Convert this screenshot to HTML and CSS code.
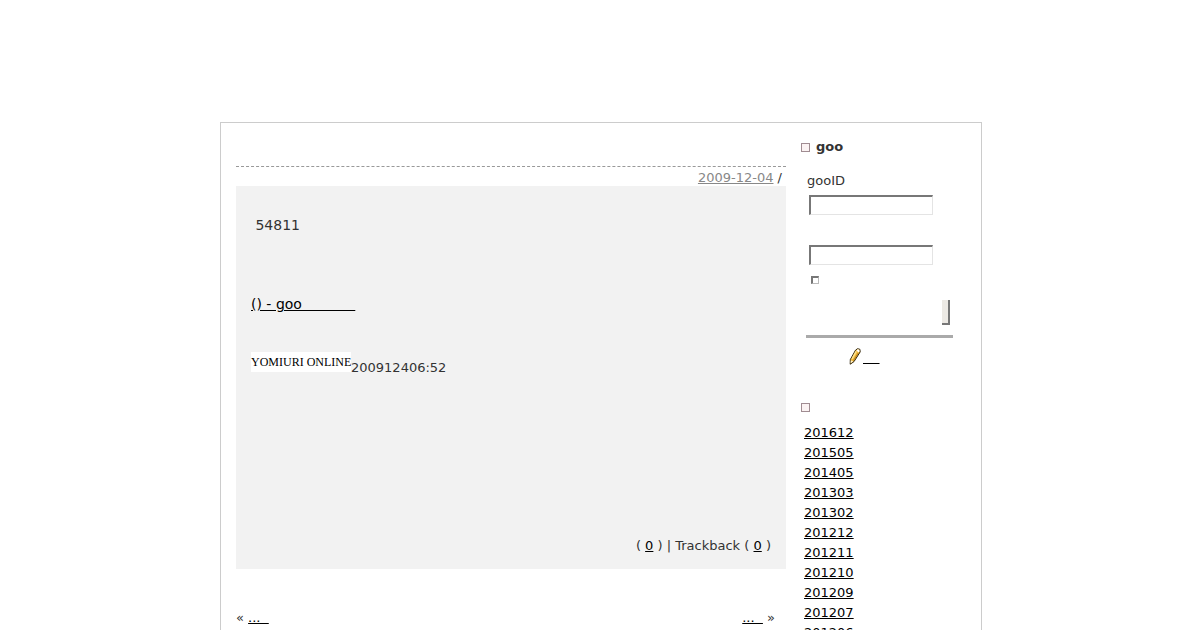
FILE: index.html
```html
<!DOCTYPE html>
<html lang="ja">

<head>
    <meta charset="UTF-8">
    <meta name="viewport" content="width=device-width, initial-scale=1.0">
    <title>goo</title>
    <link rel="stylesheet" href="styles.css">
</head>

<body>

    <div class="container">
        <!-- Entry -->
        <main class="main">
            <div class="entry-title"></div>
            <p class="entry-date"><a href="#">2009-12-04</a> /</p>
            <div class="entry-body">
                <p class="entry-text">&nbsp;54811</p>
                <p class="entry-link"><a href="#">() - goo&nbsp;&nbsp;&nbsp;&nbsp;&nbsp;&nbsp;&nbsp;&nbsp;&nbsp;&nbsp;&nbsp;&nbsp;</a></p>
                <p class="entry-source"><span class="source-logo">YOMIURI ONLINE</span>200912406:52</p>
                <p class="entry-footer">( <a href="#">0</a> ) | Trackback ( <a href="#">0</a> )</p>
            </div>
            <nav class="pager">
                <span>« <a href="#">...&nbsp;&nbsp;</a></span>
                <span><a href="#">...&nbsp;&nbsp;</a> »</span>
            </nav>
        </main>

        <!-- Sidebar -->
        <aside class="sidebar">
            <h2 class="module-title">goo</h2>
            <form class="login">
                <label for="gooid">gooID</label>
                <input type="text" id="gooid" name="gooid">
                <input type="password" id="password" name="password" aria-label="Password">
                <input type="checkbox" id="keep" name="keep" aria-label="Keep">
                <button type="submit" aria-label="Login"></button>
            </form>
            <p class="signup">
                <svg width="12" height="17" viewBox="0 0 12 17" aria-hidden="true">
                    <path d="M6.5 2.2 8.5.7l2.4.6.3 2.6L5 13.6 1.2 16.2l.1-4.6z" fill="#f0b93c" stroke="#30260f" />
                    <path d="M7.2 3.4 3 10.8" stroke="#ffe48f" stroke-width="1.4" />
                    <path d="M9.4 4.8 4.4 12.6" stroke="#bb7d18" />
                    <path d="M7.4 2.3 8.8 1.3l1.6.5.1 1.8-1 .8z" fill="#fff" />
                    <path d="m1.8 12.2 2.4 1.2-2.6 1.9z" fill="#fff5d5" />
                </svg>
                <a href="#">&nbsp;&nbsp;&nbsp;&nbsp;</a>
            </p>
            <h2 class="module-title"></h2>
            <ul class="archive">
                <li><a href="#">201612</a></li>
                <li><a href="#">201505</a></li>
                <li><a href="#">201405</a></li>
                <li><a href="#">201303</a></li>
                <li><a href="#">201302</a></li>
                <li><a href="#">201212</a></li>
                <li><a href="#">201211</a></li>
                <li><a href="#">201210</a></li>
                <li><a href="#">201209</a></li>
                <li><a href="#">201207</a></li>
                <li><a href="#">201206</a></li>
            </ul>
        </aside>
    </div>

</body>

</html>
```

FILE: styles.css
```css
*,
*::before {
    margin: 0;
    padding: 0;
    box-sizing: border-box;
}

body {
    padding: 122px 0 0 2px;
    background-color: #fff;
    color: #333;
    font-family: "DejaVu Sans", Verdana, sans-serif;
    font-size: 13px;
    line-height: 20px;
}

a {
    color: #000;
}

.container {
    display: flex;
    gap: 15px;
    max-width: 762px;
    margin: 0 auto;
    padding: 0 15px;
    border: 1px solid #ccc;
}

/* Entry */
.main {
    flex: 1;
    max-width: 550px;
}

.entry-title {
    height: 44px;
    border-bottom: 1px dashed #999;
}

.entry-date {
    padding: 2px 4px 0 0;
    line-height: 17px;
    text-align: right;
}

.entry-date a {
    color: #888;
}

.entry-body {
    padding: 29px 15px 13px;
    background-color: #f2f2f2;
}

.entry-text,
.entry-link {
    margin-bottom: 59px;
    font-size: 14px;
}

.entry-link {
    margin-bottom: 38px;
}

.entry-source {
    display: flex;
    align-items: flex-start;
    line-height: 32px;
    margin-bottom: 152px;
}

.source-logo {
    width: 100px;
    height: 20px;
    background-color: #fff;
    color: #000;
    font-family: "Liberation Serif", serif;
    font-size: 12px;
    line-height: 20px;
    white-space: nowrap;
}

.entry-footer {
    text-align: right;
}

.pager {
    display: flex;
    justify-content: space-between;
    padding: 39px 11px 40px 0;
}

/* Sidebar */
.sidebar {
    width: 165px;
    padding-top: 14px;
}

.module-title {
    display: flex;
    align-items: center;
    gap: 6px;
    height: 20px;
    font-size: 13px;
}

.module-title::before {
    content: "";
    width: 9px;
    height: 9px;
    background-color: #fbf3f3;
    border: 1px solid #a08c92;
}

.login {
    display: flex;
    flex-direction: column;
    align-items: flex-start;
    margin: 14px 13px 0 5px;
    padding: 0 3px 10px 1px;
    border-bottom: 3px solid #aaa;
}

.login input {
    width: 124px;
    height: 20px;
    margin: 4px 0 0 2px;
    background-color: #fff;
    border: 1px solid #e4e4e4;
    border-top: 2px solid #777;
    border-left: 2px solid #777;
}

.login input[type="password"] {
    margin-top: 30px;
}

.login input[type="checkbox"] {
    appearance: none;
    width: 8px;
    height: 8px;
    margin: 11px 0 0 4px;
    border-color: #bbb;
    border-top-color: #777;
    border-left-color: #777;
}

.login button {
    align-self: flex-end;
    width: 8px;
    height: 25px;
    margin-top: 16px;
    background-color: #ece9e4;
    border: 0 solid #777;
    border-width: 0 2px 2px 0;
}

.signup {
    display: flex;
    gap: 2px;
    margin: 10px 0 29px 48px;
}

.archive {
    margin: 6px 0 0 3px;
    list-style: none;
}
```
